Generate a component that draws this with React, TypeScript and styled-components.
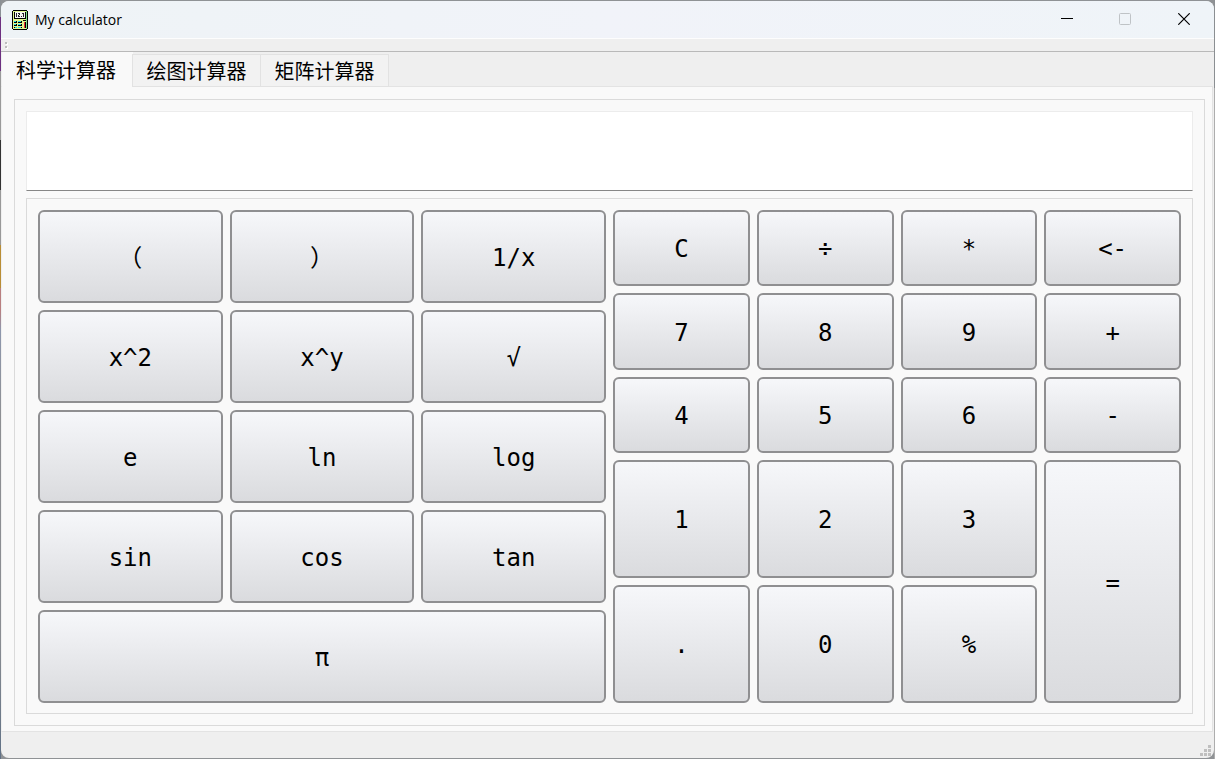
import React, { useState } from 'react';
import styled, { createGlobalStyle } from 'styled-components';

const GlobalStyle = createGlobalStyle`
  *, *::before, *::after { box-sizing: border-box; }
  body {
    margin: 0;
    color: #000;
    font-family: "Open Sans", "Noto Sans CJK SC", sans-serif;
  }
`;

const Desktop = styled.div`
  display: flex;
  min-height: 100vh;
  padding: 1px;
  background:
    linear-gradient(#8b9095 17px, #6d3080 17px 71px, #9a9a9a 71px 140px, #333 140px 190px,
      #999 190px 245px, #b98d35 245px 288px, #b97f80 288px 310px, #8d97ad 330px, #8d8f92 420px,
      #8a8d92 640px, #5f7085) left / 1px 100% no-repeat,
    linear-gradient(#8b8f92 88px, #adadad 88px) right / 1px 100% no-repeat,
    #8f9295;
`;

const Window = styled.div`
  flex: 1;
  display: flex;
  flex-direction: column;
  min-width: 0;
  overflow: hidden;
  border-radius: 8px;
  background: #efefef;
`;

const TitleBar = styled.header`
  display: flex;
  align-items: center;
  height: 38px;
  padding-left: 11px;
  gap: 7px;
  background: linear-gradient(90deg, #eef3f6, #f1f3f9 50%, #eff4f8);
  border-bottom: 1px solid #fdfdfd;
`;

const Title = styled.h1`
  flex: 1;
  margin: 0;
  font-size: 14px;
  font-weight: 400;
  line-height: 20px;
`;

const Caption = styled.button`
  display: flex;
  align-items: center;
  justify-content: center;
  width: 58px;
  height: 36px;
  padding: 0;
  border: 0;
  background: none;
  color: #000;

  &:last-child { width: 60px; }
  &:disabled { color: #bfc3c6; }
`;

const CaptionButtons = styled.div`
  display: flex;
  align-self: flex-start;
`;

const ToolBar = styled.div`
  display: flex;
  align-items: center;
  height: 13px;
  padding-left: 4px;
  border-bottom: 1px solid #b9b9b9;
`;

const TabBar = styled.div`
  display: flex;
  align-items: flex-end;
  height: 34px;
  padding-left: 2px;
`;

const Tab = styled.button<{ $active: boolean }>`
  position: relative;
  height: ${p => (p.$active ? 35 : 33)}px;
  width: ${p => (p.$active ? 131 : 129)}px;
  margin: 0 0 -1px -1px;
  padding: ${p => (p.$active ? '0 3px 0 0' : '0')};
  border: 1px solid ${p => (p.$active ? '#f9f9f9' : '#e2e2e2')};
  background: ${p => (p.$active ? '#f9f9f9' : '#f2f2f2')};
  color: #000;
  font-family: "Noto Sans CJK SC", sans-serif;
  font-size: 20px;
  line-height: 30px;
`;

const Pane = styled.main`
  flex: 1;
  display: flex;
  margin-right: 1px;
  padding: 12px 7px 5px 12px;
  border: 1px solid #e3e3e3;
  border-left-color: #efefef;
  background: #f9f9f9;
`;

const Group = styled.section`
  flex: 1;
  display: flex;
  flex-direction: column;
  gap: 7px;
  min-width: 0;
  padding: 11px;
  border: 1px solid #dadada;
`;

const Display = styled.input`
  width: 100%;
  height: 80px;
  padding: 0 12px;
  border: 1px solid #ececec;
  border-bottom-color: #868686;
  border-radius: 0;
  background: #fff;
  font-family: "DejaVu Sans Mono", monospace;
  font-size: 24px;
  text-align: right;
  outline: none;
`;

const KeyPad = styled.div`
  flex: 1;
  display: grid;
  grid-template-columns: repeat(2, minmax(0, 1fr));
  gap: 7px;
  padding: 11px 11px 10px;
  border: 1px solid #dadada;
`;

const KeyGrid = styled.div<{ $columns: number; $rows: string }>`
  display: grid;
  grid-template-columns: repeat(${p => p.$columns}, minmax(0, 1fr));
  grid-template-rows: ${p => p.$rows};
  gap: 7px;
`;

const Key = styled.button<{ $colSpan?: number; $rowSpan?: number }>`
  grid-column: span ${p => p.$colSpan ?? 1};
  grid-row: span ${p => p.$rowSpan ?? 1};
  min-height: 40px;
  padding: 2px 0 0;
  border: 2px solid #8f8f91;
  border-radius: 6px;
  background: linear-gradient(#f6f7fa, #dadbde);
  color: #000;
  font-family: "DejaVu Sans Mono", "Noto Sans CJK SC", monospace;
  font-size: 24px;
  line-height: 28px;

  &:active { background: linear-gradient(#dadbde, #f6f7fa); }
`;

const StatusBar = styled.footer`
  display: flex;
  align-items: flex-end;
  justify-content: flex-end;
  height: 26px;
  padding: 0 3px 2px 0;
`;

type KeySpec = { label: string; colSpan?: number; rowSpan?: number };

const functionKeys: KeySpec[] = [
  { label: '（' }, { label: '）' }, { label: '1/x' },
  { label: 'x^2' }, { label: 'x^y' }, { label: '√' },
  { label: 'e' }, { label: 'ln' }, { label: 'log' },
  { label: 'sin' }, { label: 'cos' }, { label: 'tan' },
  { label: 'π', colSpan: 3 },
];

const numberKeys: KeySpec[] = [
  { label: 'C' }, { label: '÷' }, { label: '*' }, { label: '<-' },
  { label: '7' }, { label: '8' }, { label: '9' }, { label: '+' },
  { label: '4' }, { label: '5' }, { label: '6' }, { label: '-' },
  { label: '1' }, { label: '2' }, { label: '3' }, { label: '=', rowSpan: 2 },
  { label: '.' }, { label: '0' }, { label: '%' },
];

const tabs = ['科学计算器', '绘图计算器', '矩阵计算器'];

const CalculatorIcon = () => (
  <svg width="16" height="20" viewBox="0 0 16 20" shapeRendering="crispEdges" aria-hidden="true">
    <path d="M1 0h14v1h1v18h-1v1H1v-1H0V1h1z" fill="#000" />
    <rect x="1" y="1" width="13" height="18" fill="#e2f590" />
    <rect x="14" y="1" width="1" height="18" fill="#7fe08a" />
    <rect x="2" y="2" width="12" height="7" fill="#000" />
    <rect x="3" y="2" width="10" height="6" fill="#f4f4f4" />
    <path d="M4 3h1v4H4zM6 3h2v1H6zM7 4h1v1H7zM6 5h1v1H6zM6 6h2v1H6zM9 6h1v1H9zM10 3h2v1h-2zM11 4h1v3h-1z" fill="#222" />
    <path d="M2 11h3v2H2zM6 11h4v2H6zM11 10h3v1h-3zM2 14h3v2H2zM6 14h4v2H6zM2 17h3v1H2zM6 17h4v1H6zM12 12h2v6h-2z" fill="#000" />
    <path d="M2 11h2v1H2zM6 11h3v1H6zM2 14h2v1H2zM6 14h3v1H6zM3 17h2v1H3zM6 17h3v1H6z" fill="#24e0ec" />
    <path d="M12 12h1v6h-1z" fill="#f0303c" />
  </svg>
);

const MinimizeIcon = () => (
  <svg width="12" height="12" viewBox="0 0 12 12" aria-hidden="true">
    <path d="M0 5.5h12" stroke="currentColor" />
  </svg>
);

const MaximizeIcon = () => (
  <svg width="12" height="12" viewBox="0 0 12 12" aria-hidden="true">
    <rect x="0.5" y="0.5" width="11" height="11" rx="1" fill="none" stroke="currentColor" />
  </svg>
);

const CloseIcon = () => (
  <svg width="12" height="12" viewBox="0 0 12 12" aria-hidden="true">
    <path d="M0.3 0.3l11.4 11.4M11.7 0.3L0.3 11.7" stroke="currentColor" strokeWidth="1.2" />
  </svg>
);

const DragHandle = () => (
  <svg width="3" height="7" viewBox="0 0 3 7" shapeRendering="crispEdges" aria-hidden="true">
    <path d="M1 1h2v2H1zM1 5h2v2H1z" fill="#fff" />
    <path d="M0 0h2v2H0zM0 4h2v2H0z" fill="#bdbdbd" />
  </svg>
);

const SizeGrip = () => (
  <svg width="11" height="11" viewBox="0 0 11 11" shapeRendering="crispEdges" aria-hidden="true">
    <path d="M8 0h3v3H8zM4 4h3v3H4zM8 4h3v3H8zM0 8h3v3H0zM4 8h3v3H4zM8 8h3v3H8z" fill="#bfbfbf" />
  </svg>
);

export default function App() {
  const [activeTab, setActiveTab] = useState(0);
  const [expression, setExpression] = useState('');

  const press = (label: string) => {
    if (label === 'C') setExpression('');
    else if (label === '<-') setExpression(value => value.slice(0, -1));
    else if (label !== '=') setExpression(value => value + label);
  };

  const renderKey = ({ label, colSpan, rowSpan }: KeySpec) => (
    <Key key={label} type="button" $colSpan={colSpan} $rowSpan={rowSpan} onClick={() => press(label)}>
      {label}
    </Key>
  );

  return (
    <>
      <GlobalStyle />
      <Desktop>
        <Window>
          <TitleBar>
            <CalculatorIcon />
            <Title>My calculator</Title>
            <CaptionButtons>
              <Caption type="button" aria-label="Minimize"><MinimizeIcon /></Caption>
              <Caption type="button" aria-label="Maximize" disabled><MaximizeIcon /></Caption>
              <Caption type="button" aria-label="Close"><CloseIcon /></Caption>
            </CaptionButtons>
          </TitleBar>
          <ToolBar><DragHandle /></ToolBar>
          <TabBar role="tablist">
            {tabs.map((name, index) => (
              <Tab
                key={name}
                type="button"
                role="tab"
                aria-selected={index === activeTab}
                $active={index === activeTab}
                onClick={() => setActiveTab(index)}
              >
                {name}
              </Tab>
            ))}
          </TabBar>
          <Pane>
            <Group>
              <Display
                type="text"
                aria-label="Expression"
                value={expression}
                onChange={event => setExpression(event.target.value)}
              />
              <KeyPad>
                <KeyGrid $columns={3} $rows="repeat(5, 1fr)">{functionKeys.map(renderKey)}</KeyGrid>
                <KeyGrid $columns={4} $rows="repeat(3, 11fr) repeat(2, 17fr)">{numberKeys.map(renderKey)}</KeyGrid>
              </KeyPad>
            </Group>
          </Pane>
          <StatusBar><SizeGrip /></StatusBar>
        </Window>
      </Desktop>
    </>
  );
}
